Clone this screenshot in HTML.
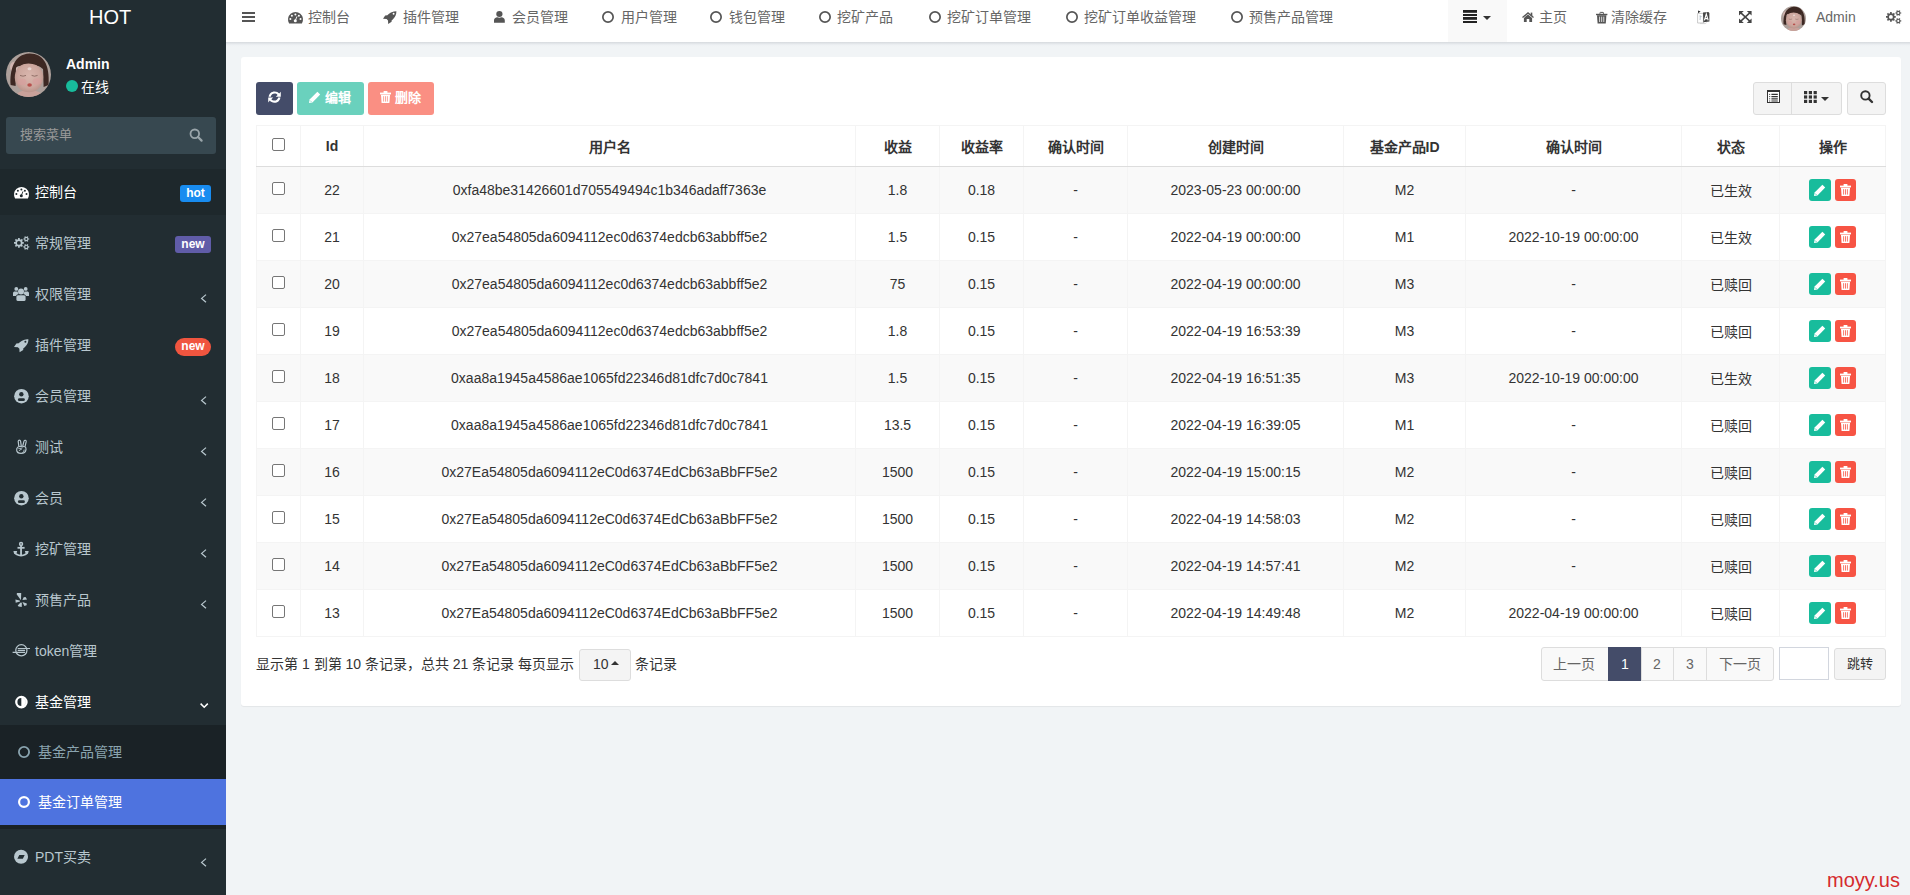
<!DOCTYPE html><html lang="zh-CN"><head><meta charset="utf-8"><style>*{box-sizing:border-box;margin:0;padding:0}
html,body{width:1910px;height:895px;overflow:hidden}
body{background:#f1f4f6;font-family:"Liberation Sans",sans-serif;font-size:14px;color:#333;position:relative}
.abs{position:absolute}
svg{display:block;overflow:visible}
#sb{position:absolute;left:0;top:0;width:226px;height:895px;background:#222d32}
#logo{position:absolute;left:89px;top:3px;font-size:20px;color:#fff;line-height:28px}
.mt{font-size:14px;line-height:18px;white-space:nowrap}
.badge{position:absolute;color:#fff;font-weight:bold;font-size:12px;text-align:center;line-height:17px}
#nav{position:absolute;left:226px;top:0;width:1684px;height:42px;background:#fff}
#navsh{position:absolute;left:226px;top:42px;width:1684px;height:5px;background:linear-gradient(#d6dade,#eef1f4 60%,#f1f4f6)}
.nt{position:absolute;top:8px;font-size:14px;line-height:18px;color:#666;white-space:nowrap}
#panel{position:absolute;left:241px;top:57px;width:1660px;height:649px;background:#fff;border-radius:3px;box-shadow:0 1px 1px rgba(0,0,0,.06)}
table{position:absolute;left:256px;top:125px;border-collapse:collapse;table-layout:fixed;width:1630px}
td,th{border:1px solid #f4f4f4;text-align:center;font-size:14px;color:#333;padding:0;white-space:nowrap}
th{height:41px;font-weight:bold;border-bottom:1px solid #ddd}
td{height:47px}
tr.odd td{background:#f9f9f9}
.cb{display:inline-block;position:relative;top:-3px;width:13px;height:13px;border:1px solid #767676;border-radius:2px;background:#fff;vertical-align:middle}
.op{display:inline-block;position:relative;width:22px;height:22px;border-radius:3px;vertical-align:middle}
</style></head><body>
<div id="sb">
<div id="logo">HOT</div>
<svg class="abs" style="left:6px;top:52px" width="45" height="45" viewBox="0 0 45 45"><defs><clipPath id="avc6"><circle cx="22.5" cy="22.5" r="22.5"/></clipPath><radialGradient id="fg6" cx="50%" cy="45%" r="55%"><stop offset="0" stop-color="#d9b6ad"/><stop offset="0.7" stop-color="#cda79e"/><stop offset="1" stop-color="#bb958c"/></radialGradient></defs><g clip-path="url(#avc6)"><rect width="45" height="45" fill="#ada09b"/><ellipse cx="8" cy="15" rx="4" ry="5" fill="#d2b4b0"/><path d="M4.6 33 C3.6 18 8 2 23.5 1.4 C37 1.2 44 12 42.6 33 L37.6 35 L37 14 L10 14 L9.6 34Z" fill="#3d2823"/><path d="M10 45 C11 40 15 38 23 38.6 C31 38 35 40 37 45Z" fill="#c9a19a"/><ellipse cx="23" cy="25.5" rx="14.2" ry="14.8" fill="url(#fg6)"/><path d="M8.4 17 C9.6 9 15 5.4 23.5 5.2 C31.5 5.4 37.2 9.8 38.2 18 C33 13.6 28 11.6 22.5 11.6 C16.6 11.6 11.8 13.8 8.4 17Z" fill="#3d2823"/><ellipse cx="16" cy="30" rx="4.4" ry="3.2" fill="#d89c9c" opacity="0.55"/><ellipse cx="31" cy="29.5" rx="4.4" ry="3.2" fill="#d89c9c" opacity="0.55"/><path d="M14 23.4 Q17 25 20 23.4 M25.6 23.4 Q28.6 25 31.6 23.4" stroke="#8a6a62" stroke-width="0.9" fill="none"/><ellipse cx="23.6" cy="33" rx="2.3" ry="1.7" fill="#b8504c"/><ellipse cx="23.5" cy="16.8" rx="2" ry="1.5" fill="#eee0dc" opacity="0.8"/></g></svg>
<div class="abs" style="left:66px;top:55px;font-weight:bold;color:#fff;font-size:14px;line-height:18px">Admin</div>
<div class="abs" style="left:66px;top:80px;width:12px;height:12px;border-radius:50%;background:#18bc9c"></div>
<div class="abs" style="left:81px;top:78px;color:#fff;font-size:14px;line-height:18px">在线</div>
<div class="abs" style="left:6px;top:117px;width:210px;height:37px;background:#374850;border-radius:3px"></div>
<div class="abs" style="left:20px;top:126px;color:#999;font-size:13px;line-height:18px">搜索菜单</div>
<svg class="abs" style="left:189px;top:128px" width="14" height="14" viewBox="0 0 14 14"><circle cx="5.8" cy="5.8" r="4.3" fill="none" stroke="#9aa5aa" stroke-width="1.8"/><path d="M9 9l3.6 3.6" stroke="#9aa5aa" stroke-width="2.2" stroke-linecap="round"/></svg>
<div class="abs" style="left:0;top:169px;width:226px;height:46px;background:#1e282c"></div>
<svg preserveAspectRatio="none" class="abs" style="left:13.6px;top:187px" width="15" height="11.5" viewBox="0 0 15 11.5"><path d="M1.1 11.4 A7.5 7.5 0 1 1 13.9 11.4 Z" fill="#fff"/><circle cx="7.4" cy="2.4" r="1" fill="#1e282c"/><circle cx="3.9" cy="3.7" r="1" fill="#1e282c"/><circle cx="10.9" cy="3.7" r="1" fill="#1e282c"/><circle cx="2.4" cy="7.1" r="1" fill="#1e282c"/><circle cx="12.5" cy="7.1" r="1" fill="#1e282c"/><path d="M7.3 8.6 L9 4.4" stroke="#1e282c" stroke-width="0.9"/><circle cx="7.3" cy="8.7" r="1.5" fill="#1e282c"/></svg>
<div class="abs mt" style="left:35px;top:183px;color:#fff;">控制台</div>
<div class="badge" style="left:180px;top:185px;width:31px;height:17px;background:#188cf0;border-radius:3px">hot</div>
<svg preserveAspectRatio="none" class="abs" style="left:13.5px;top:236px" width="15" height="14" viewBox="0 0 15 14"><circle cx="4.9" cy="6.9" r="2.8" fill="none" stroke="#b8c7ce" stroke-width="1.7"/><path d="M7.90 6.90 L9.80 6.90" stroke="#b8c7ce" stroke-width="1.7"/><path d="M7.02 9.02 L8.36 10.36" stroke="#b8c7ce" stroke-width="1.7"/><path d="M4.90 9.90 L4.90 11.80" stroke="#b8c7ce" stroke-width="1.7"/><path d="M2.78 9.02 L1.44 10.36" stroke="#b8c7ce" stroke-width="1.7"/><path d="M1.90 6.90 L0.00 6.90" stroke="#b8c7ce" stroke-width="1.7"/><path d="M2.78 4.78 L1.44 3.44" stroke="#b8c7ce" stroke-width="1.7"/><path d="M4.90 3.90 L4.90 2.00" stroke="#b8c7ce" stroke-width="1.7"/><path d="M7.02 4.78 L8.36 3.44" stroke="#b8c7ce" stroke-width="1.7"/><circle cx="12.3" cy="3.0" r="1.65" fill="none" stroke="#b8c7ce" stroke-width="1.2"/><path d="M14.20 3.00 L15.25 3.00" stroke="#b8c7ce" stroke-width="1.2"/><path d="M13.25 4.65 L13.78 5.55" stroke="#b8c7ce" stroke-width="1.2"/><path d="M11.35 4.65 L10.83 5.55" stroke="#b8c7ce" stroke-width="1.2"/><path d="M10.40 3.00 L9.35 3.00" stroke="#b8c7ce" stroke-width="1.2"/><path d="M11.35 1.35 L10.82 0.45" stroke="#b8c7ce" stroke-width="1.2"/><path d="M13.25 1.35 L13.78 0.45" stroke="#b8c7ce" stroke-width="1.2"/><circle cx="12.3" cy="10.9" r="1.65" fill="none" stroke="#b8c7ce" stroke-width="1.2"/><path d="M14.20 10.90 L15.25 10.90" stroke="#b8c7ce" stroke-width="1.2"/><path d="M13.25 12.55 L13.78 13.45" stroke="#b8c7ce" stroke-width="1.2"/><path d="M11.35 12.55 L10.83 13.45" stroke="#b8c7ce" stroke-width="1.2"/><path d="M10.40 10.90 L9.35 10.90" stroke="#b8c7ce" stroke-width="1.2"/><path d="M11.35 9.25 L10.82 8.35" stroke="#b8c7ce" stroke-width="1.2"/><path d="M13.25 9.25 L13.78 8.35" stroke="#b8c7ce" stroke-width="1.2"/></svg>
<div class="abs mt" style="left:35px;top:234px;color:#b8c7ce;">常规管理</div>
<div class="badge" style="left:175px;top:236px;width:36px;height:17px;background:#605ca8;border-radius:3px">new</div>
<svg preserveAspectRatio="none" class="abs" style="left:13px;top:287px" width="16" height="14" viewBox="0 0 16 14"><circle cx="8" cy="4.4" r="3" fill="#b8c7ce"/><circle cx="3.3" cy="1.9" r="1.9" fill="#b8c7ce"/><circle cx="12.7" cy="1.9" r="1.9" fill="#b8c7ce"/><rect x="3.4" y="8.2" width="9.2" height="5.8" rx="1.6" fill="#b8c7ce"/><path d="M0 9 L0 6.2 C0 5 0.8 4.4 1.8 4.4 L4.6 4.4 C4.8 5.6 5.2 6.2 5.8 7 C4.4 7.4 3.4 8 3 9Z" fill="#b8c7ce"/><path d="M16 9 L16 6.2 C16 5 15.2 4.4 14.2 4.4 L11.4 4.4 C11.2 5.6 10.8 6.2 10.2 7 C11.6 7.4 12.6 8 13 9Z" fill="#b8c7ce"/></svg>
<div class="abs mt" style="left:35px;top:285px;color:#b8c7ce;">权限管理</div>
<svg class="abs" style="left:201px;top:294px" width="7" height="9" viewBox="0 0 7 9"><path d="M5 0.6 L0.6 4.4 L5 8.2" fill="none" stroke="#b8c7ce" stroke-width="1.25"/></svg>
<svg preserveAspectRatio="none" class="abs" style="left:14px;top:338.8px" width="14.5" height="13.2" viewBox="0 0 13.5 13"><path d="M13.4 0.2 C13.4 1.6 13.2 3.2 12.6 4.4 C11.6 6.4 10.2 8 8.6 9.4 L8.6 10.8 L5.2 13 L5 9.6 L3.6 8.1 L0 7.8 L2.2 4.4 L4.4 4.2 C5.8 2.8 7 2 8.6 1.2 C10.2 0.4 11.8 0.2 13.4 0.2Z" fill="#b8c7ce"/><circle cx="10.6" cy="2.7" r="0.95" fill="#222d32"/></svg>
<div class="abs mt" style="left:35px;top:336px;color:#b8c7ce;">插件管理</div>
<div class="badge" style="left:175px;top:338px;width:36px;height:18px;background:#f0553f;border-radius:9px">new</div>
<svg preserveAspectRatio="none" class="abs" style="left:13.6px;top:389px" width="15" height="14" viewBox="0 0 15 14"><ellipse cx="7.45" cy="7.2" rx="7.3" ry="7.2" fill="#b8c7ce"/><circle cx="7.35" cy="5.25" r="2.2" fill="#222d32"/><rect x="3.9" y="9.2" width="7" height="2.9" rx="1.45" fill="#222d32"/></svg>
<div class="abs mt" style="left:35px;top:387px;color:#b8c7ce;">会员管理</div>
<svg class="abs" style="left:201px;top:396px" width="7" height="9" viewBox="0 0 7 9"><path d="M5 0.6 L0.6 4.4 L5 8.2" fill="none" stroke="#b8c7ce" stroke-width="1.25"/></svg>
<svg preserveAspectRatio="none" class="abs" style="left:15.6px;top:440px" width="11" height="14" viewBox="0 0 11 14"><path d="M2.8 6.4 L2.2 1.3 Q2.3 0.2 3.4 0.2 Q4.4 0.2 4.6 1.3 L5.3 6.2" fill="none" stroke="#b8c7ce" stroke-width="1.2"/><path d="M6.7 6.2 L8 1.1 Q8.4 0.1 9.4 0.3 Q10.4 0.7 10.2 1.7 L9 6.6" fill="none" stroke="#b8c7ce" stroke-width="1.2"/><path d="M1.6 7.4 Q0.5 8.4 0.7 10.4 Q1.1 13.4 5 13.4 Q9.4 13.4 10 9.6 Q10.2 7.4 9 6.8 Q7.8 6.2 6.2 6.9 Q4.6 6.2 3.2 6.5 Q2.2 6.8 1.6 7.4 Z" fill="none" stroke="#b8c7ce" stroke-width="1.2"/><path d="M2.4 8.6 Q4 7.8 5.6 8.8 M2.8 10.8 L6.2 8.6 M6.4 12.6 Q8.2 11.8 8.2 9.6" fill="none" stroke="#b8c7ce" stroke-width="0.9"/></svg>
<div class="abs mt" style="left:35px;top:438px;color:#b8c7ce;">测试</div>
<svg class="abs" style="left:201px;top:447px" width="7" height="9" viewBox="0 0 7 9"><path d="M5 0.6 L0.6 4.4 L5 8.2" fill="none" stroke="#b8c7ce" stroke-width="1.25"/></svg>
<svg preserveAspectRatio="none" class="abs" style="left:13.6px;top:491px" width="15" height="14" viewBox="0 0 15 14"><ellipse cx="7.45" cy="7.2" rx="7.3" ry="7.2" fill="#b8c7ce"/><circle cx="7.35" cy="5.25" r="2.2" fill="#222d32"/><rect x="3.9" y="9.2" width="7" height="2.9" rx="1.45" fill="#222d32"/></svg>
<div class="abs mt" style="left:35px;top:489px;color:#b8c7ce;">会员</div>
<svg class="abs" style="left:201px;top:498px" width="7" height="9" viewBox="0 0 7 9"><path d="M5 0.6 L0.6 4.4 L5 8.2" fill="none" stroke="#b8c7ce" stroke-width="1.25"/></svg>
<svg preserveAspectRatio="none" class="abs" style="left:13px;top:542px" width="16" height="14" viewBox="0 0 16 14"><circle cx="8.06" cy="1.9" r="1.45" fill="none" stroke="#b8c7ce" stroke-width="1.5"/><rect x="4.5" y="4.9" width="7.1" height="1.8" fill="#b8c7ce"/><rect x="7.15" y="3.2" width="1.8" height="10" fill="#b8c7ce"/><path d="M1.6 10.2 Q3 13.4 8.05 13.6 Q13.1 13.4 14.5 10.2" fill="none" stroke="#b8c7ce" stroke-width="1.7"/><path d="M0.4 9 H4.2 L3.6 11 L1.2 12Z M15.7 9 H11.9 L12.5 11 L14.9 12Z" fill="#b8c7ce"/></svg>
<div class="abs mt" style="left:35px;top:540px;color:#b8c7ce;">挖矿管理</div>
<svg class="abs" style="left:201px;top:549px" width="7" height="9" viewBox="0 0 7 9"><path d="M5 0.6 L0.6 4.4 L5 8.2" fill="none" stroke="#b8c7ce" stroke-width="1.25"/></svg>
<svg preserveAspectRatio="none" class="abs" style="left:14.8px;top:593px" width="12.5" height="14" viewBox="0 0 12.5 14"><path d="M1.6 1.2 L2 0 L6.2 0 L6 7.3Z" fill="#b8c7ce"/><path d="M7.4 7 L8.7 4.2 L10.5 3.9 L12.1 6.4Z" fill="#b8c7ce"/><path d="M0.4 6.4 L0.7 9.7 L5.1 8.4 L4.7 7.5Z" fill="#b8c7ce"/><path d="M2.7 12.4 L5.6 9.5 L6.9 9.7 L6.7 14 L3.6 13.5Z" fill="#b8c7ce"/><path d="M7.4 9.1 L11.8 10.4 L11.6 12.2 L9.4 13.1Z" fill="#b8c7ce"/></svg>
<div class="abs mt" style="left:35px;top:591px;color:#b8c7ce;">预售产品</div>
<svg class="abs" style="left:201px;top:600px" width="7" height="9" viewBox="0 0 7 9"><path d="M5 0.6 L0.6 4.4 L5 8.2" fill="none" stroke="#b8c7ce" stroke-width="1.25"/></svg>
<svg preserveAspectRatio="none" class="abs" style="left:12.7px;top:644px" width="16.5" height="13" viewBox="0 0 16.5 13"><circle cx="8.36" cy="6.3" r="5.6" fill="none" stroke="#b8c7ce" stroke-width="1.25"/><path d="M4.7 4.5 H17 M4.7 6.4 H12.05 M-0.4 8.4 H12.05" stroke="#b8c7ce" stroke-width="1.1"/></svg>
<div class="abs mt" style="left:35px;top:642px;color:#b8c7ce;">token管理</div>
<svg preserveAspectRatio="none" class="abs" style="left:14.8px;top:695.8px" width="13" height="12.5" viewBox="0 0 13 12.5"><circle cx="6.4" cy="6.1" r="5.15" fill="none" stroke="#fff" stroke-width="2.3"/><path d="M6.3 1.5 A4.6 4.6 0 0 1 6.3 10.7Z" fill="#fff"/></svg>
<div class="abs mt" style="left:35px;top:693px;color:#fff;">基金管理</div>
<svg class="abs" style="left:200.3px;top:703.4px" width="8.4" height="5" viewBox="0 0 8.4 5"><path d="M0.6 0.6 L4.2 4.2 L7.8 0.6" fill="none" stroke="#fff" stroke-width="1.5"/></svg>
<div class="abs" style="left:0;top:725px;width:226px;height:104px;background:#1a2226"></div>
<svg class="abs" style="left:18px;top:746px" width="12" height="12" viewBox="0 0 12 12"><circle cx="6" cy="6" r="5.10" fill="none" stroke="#8aa4af" stroke-width="1.8"/></svg>
<div class="abs mt" style="left:38px;top:743px;color:#8aa4af">基金产品管理</div>
<div class="abs" style="left:0;top:779px;width:226px;height:46px;background:#4e73df"></div>
<svg class="abs" style="left:18px;top:796px" width="12" height="12" viewBox="0 0 12 12"><circle cx="6" cy="6" r="4.90" fill="none" stroke="#fff" stroke-width="2.2"/></svg>
<div class="abs mt" style="left:38px;top:793px;color:#fff">基金订单管理</div>
<svg class="abs" style="left:14px;top:850px" width="14" height="14" viewBox="0 0 14 14"><circle cx="7.05" cy="6.8" r="7" fill="#b8c7ce"/><path d="M3.4 8.8 L5.3 5.1 L10.7 5.1 L8.8 8.8Z" fill="#222d32"/></svg>
<div class="abs mt" style="left:35px;top:848px;color:#b8c7ce">PDT买卖</div>
<svg class="abs" style="left:201px;top:857.5px" width="7" height="9" viewBox="0 0 7 9"><path d="M5 0.6 L0.6 4.4 L5 8.2" fill="none" stroke="#b8c7ce" stroke-width="1.25"/></svg>
</div>
<div id="nav"></div><div id="navsh"></div>
<svg class="abs" style="left:242px;top:12px" width="13" height="10" viewBox="0 0 13 10"><rect x="0" y="0" width="13" height="2" fill="#555"/><rect x="0" y="4" width="13" height="2" fill="#555"/><rect x="0" y="8" width="13" height="2" fill="#555"/></svg>
<svg class="abs" style="left:288px;top:11.8px" width="15" height="11.5" viewBox="0 0 15 11.5"><path d="M1.1 11.4 A7.5 7.5 0 1 1 13.9 11.4 Z" fill="#555"/><circle cx="7.4" cy="2.4" r="1" fill="#fff"/><circle cx="3.9" cy="3.7" r="1" fill="#fff"/><circle cx="10.9" cy="3.7" r="1" fill="#fff"/><circle cx="2.4" cy="7.1" r="1" fill="#fff"/><circle cx="12.5" cy="7.1" r="1" fill="#fff"/><path d="M7.3 8.6 L9 4.4" stroke="#fff" stroke-width="0.9"/><circle cx="7.3" cy="8.7" r="1.5" fill="#fff"/></svg>
<div class="nt" style="left:308px">控制台</div>
<svg class="abs" style="left:383.3px;top:10.8px" width="13.5" height="13" viewBox="0 0 13.5 13"><path d="M13.4 0.2 C13.4 1.6 13.2 3.2 12.6 4.4 C11.6 6.4 10.2 8 8.6 9.4 L8.6 10.8 L5.2 13 L5 9.6 L3.6 8.1 L0 7.8 L2.2 4.4 L4.4 4.2 C5.8 2.8 7 2 8.6 1.2 C10.2 0.4 11.8 0.2 13.4 0.2Z" fill="#555"/><circle cx="10.6" cy="2.7" r="0.95" fill="#fff"/></svg>
<div class="nt" style="left:403px">插件管理</div>
<svg preserveAspectRatio="none" class="abs" style="left:493.6px;top:10.8px" width="10.8" height="11.8" viewBox="0 0 11 13"><circle cx="5.5" cy="3.3" r="3.2" fill="#555"/><path d="M0 13 L0 10.4 C0 8.2 1.6 7 3.4 6.9 C4.6 7.6 6.4 7.6 7.6 6.9 C9.4 7 11 8.2 11 10.4 L11 13Z" fill="#555"/></svg>
<div class="nt" style="left:512px">会员管理</div>
<svg class="abs" style="left:602px;top:11px" width="12" height="12" viewBox="0 0 12 12"><circle cx="6" cy="6" r="5.15" fill="none" stroke="#555" stroke-width="1.7"/></svg>
<div class="nt" style="left:621px">用户管理</div>
<svg class="abs" style="left:710px;top:11px" width="12" height="12" viewBox="0 0 12 12"><circle cx="6" cy="6" r="5.15" fill="none" stroke="#555" stroke-width="1.7"/></svg>
<div class="nt" style="left:729px">钱包管理</div>
<svg class="abs" style="left:819px;top:11px" width="12" height="12" viewBox="0 0 12 12"><circle cx="6" cy="6" r="5.15" fill="none" stroke="#555" stroke-width="1.7"/></svg>
<div class="nt" style="left:837px">挖矿产品</div>
<svg class="abs" style="left:929px;top:11px" width="12" height="12" viewBox="0 0 12 12"><circle cx="6" cy="6" r="5.15" fill="none" stroke="#555" stroke-width="1.7"/></svg>
<div class="nt" style="left:947px">挖矿订单管理</div>
<svg class="abs" style="left:1066px;top:11px" width="12" height="12" viewBox="0 0 12 12"><circle cx="6" cy="6" r="5.15" fill="none" stroke="#555" stroke-width="1.7"/></svg>
<div class="nt" style="left:1084px">挖矿订单收益管理</div>
<svg class="abs" style="left:1231px;top:11px" width="12" height="12" viewBox="0 0 12 12"><circle cx="6" cy="6" r="5.15" fill="none" stroke="#555" stroke-width="1.7"/></svg>
<div class="nt" style="left:1249px">预售产品管理</div>
<div class="abs" style="left:1448px;top:0;width:59px;height:42px;background:#f9f9f9"></div>
<svg class="abs" style="left:1463px;top:10px" width="14" height="13" viewBox="0 0 14 13"><rect x="0" y="0" width="14" height="2.8" fill="#222"/><rect x="0" y="4" width="14" height="2" fill="#222"/><rect x="0" y="7" width="14" height="2.8" fill="#222"/><rect x="0" y="11" width="14" height="2" fill="#222"/></svg>
<svg class="abs" style="left:1483px;top:16px" width="8" height="4" viewBox="0 0 8 4"><path d="M0 0 H8 L4 4Z" fill="#333"/></svg>
<svg class="abs" style="left:1522px;top:12px" width="12" height="10" viewBox="0 0 12 10"><path d="M0.5 5.6 L6 0.9 L11.5 5.6" fill="none" stroke="#555" stroke-width="1.3"/><rect x="8.7" y="0.6" width="1.6" height="3.4" fill="#555"/><path d="M1.9 5.9 L6 2.5 L10.1 5.9 V10 H7.3 V7 H4.7 V10 H1.9Z" fill="#555"/></svg>
<div class="nt" style="left:1539px">主页</div>
<svg class="abs" style="left:1596.4px;top:11.5px" width="11.4" height="11.4" viewBox="0 0 11.4 11.4"><path d="M3.9 1.8 V0.9 Q3.9 0.4 4.4 0.4 H7 Q7.5 0.4 7.5 0.9 V1.8" fill="none" stroke="#555" stroke-width="1"/><rect x="0" y="1.8" width="11.4" height="1.4" fill="#555"/><path d="M1 3.2 H10.4 L9.8 11.4 H1.6Z" fill="#555"/><path d="M3.6 4.6 V10 M5.7 4.6 V10 M7.8 4.6 V10" stroke="#fff" stroke-width="0.8"/></svg>
<div class="nt" style="left:1611px">清除缓存</div>
<svg class="abs" style="left:1697px;top:10px" width="13" height="14" viewBox="0 0 13 14"><path d="M0.6 3.4 H6.4 V13 H0.6Z" fill="#fff" stroke="#bbb" stroke-width="0.8"/><path d="M1 0.4 L3.6 1.6 L1 3.2Z" fill="#333"/><path d="M6 2.6 L11.4 2 L12.4 3 L12.4 11.4 L6.4 12.2Z" fill="#444"/><path d="M7.4 10.4 L9.3 4 L11.2 10.4 M8 8.6 H10.6" stroke="#fff" stroke-width="1.1" fill="none"/><path d="M2.4 6 Q3.6 5.6 4.6 6.6 M3.4 6 L3 10" stroke="#9ab" stroke-width="0.7" fill="none"/><path d="M3 13.6 H8.4 L9.6 12.6" stroke="#ccc" stroke-width="0.8" fill="none"/></svg>
<svg class="abs" style="left:1739px;top:11px" width="12.6" height="12" viewBox="0 0 12.6 12"><path d="M1.6 1.6 L11 10.4 M11 1.6 L1.6 10.4" stroke="#444" stroke-width="1.5"/><path d="M0 0 H4.8 L0 4.6Z M12.6 0 H7.8 L12.6 4.6Z M0 12 H4.8 L0 7.4Z M12.6 12 H7.8 L12.6 7.4Z" fill="#444"/></svg>
<svg class="abs" style="left:1781px;top:6px" width="25" height="25" viewBox="0 0 45 45"><defs><clipPath id="avc1781"><circle cx="22.5" cy="22.5" r="22.5"/></clipPath><radialGradient id="fg1781" cx="50%" cy="45%" r="55%"><stop offset="0" stop-color="#d9b6ad"/><stop offset="0.7" stop-color="#cda79e"/><stop offset="1" stop-color="#bb958c"/></radialGradient></defs><g clip-path="url(#avc1781)"><rect width="45" height="45" fill="#ada09b"/><ellipse cx="8" cy="15" rx="4" ry="5" fill="#d2b4b0"/><path d="M4.6 33 C3.6 18 8 2 23.5 1.4 C37 1.2 44 12 42.6 33 L37.6 35 L37 14 L10 14 L9.6 34Z" fill="#3d2823"/><path d="M10 45 C11 40 15 38 23 38.6 C31 38 35 40 37 45Z" fill="#c9a19a"/><ellipse cx="23" cy="25.5" rx="14.2" ry="14.8" fill="url(#fg1781)"/><path d="M8.4 17 C9.6 9 15 5.4 23.5 5.2 C31.5 5.4 37.2 9.8 38.2 18 C33 13.6 28 11.6 22.5 11.6 C16.6 11.6 11.8 13.8 8.4 17Z" fill="#3d2823"/><ellipse cx="16" cy="30" rx="4.4" ry="3.2" fill="#d89c9c" opacity="0.55"/><ellipse cx="31" cy="29.5" rx="4.4" ry="3.2" fill="#d89c9c" opacity="0.55"/><path d="M14 23.4 Q17 25 20 23.4 M25.6 23.4 Q28.6 25 31.6 23.4" stroke="#8a6a62" stroke-width="0.9" fill="none"/><ellipse cx="23.6" cy="33" rx="2.3" ry="1.7" fill="#b8504c"/><ellipse cx="23.5" cy="16.8" rx="2" ry="1.5" fill="#eee0dc" opacity="0.8"/></g></svg>
<div class="nt" style="left:1816px">Admin</div>
<svg class="abs" style="left:1886px;top:10px" width="15" height="14" viewBox="0 0 15 14"><circle cx="4.9" cy="6.9" r="2.8" fill="none" stroke="#555" stroke-width="1.7"/><path d="M7.90 6.90 L9.80 6.90" stroke="#555" stroke-width="1.7"/><path d="M7.02 9.02 L8.36 10.36" stroke="#555" stroke-width="1.7"/><path d="M4.90 9.90 L4.90 11.80" stroke="#555" stroke-width="1.7"/><path d="M2.78 9.02 L1.44 10.36" stroke="#555" stroke-width="1.7"/><path d="M1.90 6.90 L0.00 6.90" stroke="#555" stroke-width="1.7"/><path d="M2.78 4.78 L1.44 3.44" stroke="#555" stroke-width="1.7"/><path d="M4.90 3.90 L4.90 2.00" stroke="#555" stroke-width="1.7"/><path d="M7.02 4.78 L8.36 3.44" stroke="#555" stroke-width="1.7"/><circle cx="12.3" cy="3.0" r="1.65" fill="none" stroke="#555" stroke-width="1.2"/><path d="M14.20 3.00 L15.25 3.00" stroke="#555" stroke-width="1.2"/><path d="M13.25 4.65 L13.78 5.55" stroke="#555" stroke-width="1.2"/><path d="M11.35 4.65 L10.83 5.55" stroke="#555" stroke-width="1.2"/><path d="M10.40 3.00 L9.35 3.00" stroke="#555" stroke-width="1.2"/><path d="M11.35 1.35 L10.82 0.45" stroke="#555" stroke-width="1.2"/><path d="M13.25 1.35 L13.78 0.45" stroke="#555" stroke-width="1.2"/><circle cx="12.3" cy="10.9" r="1.65" fill="none" stroke="#555" stroke-width="1.2"/><path d="M14.20 10.90 L15.25 10.90" stroke="#555" stroke-width="1.2"/><path d="M13.25 12.55 L13.78 13.45" stroke="#555" stroke-width="1.2"/><path d="M11.35 12.55 L10.83 13.45" stroke="#555" stroke-width="1.2"/><path d="M10.40 10.90 L9.35 10.90" stroke="#555" stroke-width="1.2"/><path d="M11.35 9.25 L10.82 8.35" stroke="#555" stroke-width="1.2"/><path d="M13.25 9.25 L13.78 8.35" stroke="#555" stroke-width="1.2"/></svg>
<div id="panel"></div>
<div class="abs" style="left:256px;top:82px;width:37px;height:33px;background:#444c69;border-radius:3px"></div>
<svg class="abs" style="left:268px;top:91px" width="13" height="12.2" viewBox="0 0 13 12.2"><path d="M0.6 5.8 C1 2.6 3.4 0.4 6.6 0.4 C8.6 0.4 10.2 1.2 11.2 2.6 L12.8 0.8 V5.8 H7.8 L9.6 4 C8.9 3 7.8 2.6 6.6 2.6 C4.8 2.6 3.2 3.8 2.8 5.8 Z M12.4 6.4 C12 9.6 9.6 11.8 6.4 11.8 C4.4 11.8 2.8 11 1.8 9.6 L0.2 11.4 V6.4 H5.2 L3.4 8.2 C4.1 9.2 5.2 9.6 6.4 9.6 C8.2 9.6 9.8 8.4 10.2 6.4 Z" fill="#fff"/></svg>
<div class="abs" style="left:297px;top:82px;width:67px;height:33px;background:#6ad1bd;border-radius:3px"></div>
<svg class="abs" style="left:309px;top:91px" width="12" height="12" viewBox="0 0 12 12"><path d="M0 12 L0.6 8.6 L8.4 0.8 L11.2 3.6 L3.4 11.4Z" fill="#fff"/><path d="M1.2 9.6 L2.4 10.8" stroke="#6ad1bd" stroke-width="0.8"/></svg>
<div class="abs" style="left:325px;top:89px;font-size:13px;line-height:18px;color:#fff;font-weight:bold">编辑</div>
<div class="abs" style="left:368px;top:82px;width:66px;height:33px;background:#fa8f83;border-radius:3px"></div>
<svg class="abs" style="left:380px;top:91px" width="11" height="12" viewBox="0 0 11 12"><rect x="0" y="1.6" width="11" height="1.8" fill="#fff"/><rect x="3.6" y="0" width="3.8" height="2" fill="#fff"/><path d="M1 3.8 H10 L9.4 12 H1.6Z" fill="#fff"/><path d="M3.6 5.2 V10.6 M5.5 5.2 V10.6 M7.4 5.2 V10.6" stroke="#fa8f83" stroke-width="0.8"/></svg>
<div class="abs" style="left:395px;top:89px;font-size:13px;line-height:18px;color:#fff;font-weight:bold">删除</div>
<div class="abs" style="left:1753px;top:82px;width:89px;height:33px;background:#f4f4f4;border:1px solid #ddd;border-radius:3px"></div>
<div class="abs" style="left:1791px;top:82px;width:1px;height:33px;background:#ddd"></div>
<svg class="abs" style="left:1767px;top:90px" width="13" height="13" viewBox="0 0 13 13"><rect x="0.5" y="0.5" width="12" height="12" fill="#fff" stroke="#333" stroke-width="1"/><rect x="0" y="0" width="13" height="2" fill="#333"/><path d="M2.2 4.4 h1 M2.2 6.6 h1 M2.2 8.8 h1 M2.2 11 h1" stroke="#333" stroke-width="1"/><path d="M4.4 4.4 H10.8 M4.4 6.6 H10.8 M4.4 8.8 H10.8 M4.4 11 H10.8" stroke="#333" stroke-width="1.2"/></svg>
<svg class="abs" style="left:1804px;top:91px" width="13" height="12" viewBox="0 0 13 12"><rect x="0" y="0" width="3.2" height="3.2" fill="#333"/><rect x="0" y="4.4" width="3.2" height="3.2" fill="#333"/><rect x="0" y="8.8" width="3.2" height="3.2" fill="#333"/><rect x="4.8" y="0" width="3.2" height="3.2" fill="#333"/><rect x="4.8" y="4.4" width="3.2" height="3.2" fill="#333"/><rect x="4.8" y="8.8" width="3.2" height="3.2" fill="#333"/><rect x="9.6" y="0" width="3.2" height="3.2" fill="#333"/><rect x="9.6" y="4.4" width="3.2" height="3.2" fill="#333"/><rect x="9.6" y="8.8" width="3.2" height="3.2" fill="#333"/></svg>
<svg class="abs" style="left:1821px;top:97px" width="8" height="4" viewBox="0 0 8 4"><path d="M0 0 H8 L4 4Z" fill="#333"/></svg>
<div class="abs" style="left:1847px;top:82px;width:39px;height:33px;background:#f4f4f4;border:1px solid #ddd;border-radius:3px"></div>
<svg class="abs" style="left:1860px;top:90px" width="13" height="13" viewBox="0 0 13 13"><circle cx="5.4" cy="5.4" r="4.2" fill="none" stroke="#333" stroke-width="1.9"/><path d="M8.6 8.6 L12 12" stroke="#333" stroke-width="2.4" stroke-linecap="round"/></svg>
<table><colgroup><col style="width:44px"><col style="width:63px"><col style="width:492px"><col style="width:84px"><col style="width:84px"><col style="width:104px"><col style="width:216px"><col style="width:122px"><col style="width:216px"><col style="width:98px"><col style="width:106px"></colgroup><tr><th><span class="cb"></span></th><th>Id</th><th>用户名</th><th>收益</th><th>收益率</th><th>确认时间</th><th>创建时间</th><th>基金产品ID</th><th>确认时间</th><th>状态</th><th>操作</th></tr><tr class="odd"><td><span class="cb"></span></td><td>22</td><td>0xfa48be31426601d705549494c1b346adaff7363e</td><td>1.8</td><td>0.18</td><td>-</td><td>2023-05-23 00:00:00</td><td>M2</td><td>-</td><td>已生效</td><td><span class="op" style="background:#18bc9c;margin-right:4px"><svg width="12" height="12" viewBox="0 0 12 12" style="position:absolute;left:5px;top:5px"><path d="M0 12 L0.6 8.6 L8.4 0.8 L11.2 3.6 L3.4 11.4Z" fill="#fff"/><path d="M1.2 9.6 L2.4 10.8" stroke="#18bc9c" stroke-width="0.8"/></svg></span><span class="op" style="background:#f75444;width:21px"><svg width="11" height="12" viewBox="0 0 11 12" style="position:absolute;left:5px;top:5px"><rect x="0" y="1.6" width="11" height="1.8" fill="#fff"/><rect x="3.6" y="0" width="3.8" height="2" fill="#fff"/><path d="M1 3.8 H10 L9.4 12 H1.6Z" fill="#fff"/><path d="M3.6 5.2 V10.6 M5.5 5.2 V10.6 M7.4 5.2 V10.6" stroke="#f75444" stroke-width="0.8"/></svg></span></td></tr><tr><td><span class="cb"></span></td><td>21</td><td>0x27ea54805da6094112ec0d6374edcb63abbff5e2</td><td>1.5</td><td>0.15</td><td>-</td><td>2022-04-19 00:00:00</td><td>M1</td><td>2022-10-19 00:00:00</td><td>已生效</td><td><span class="op" style="background:#18bc9c;margin-right:4px"><svg width="12" height="12" viewBox="0 0 12 12" style="position:absolute;left:5px;top:5px"><path d="M0 12 L0.6 8.6 L8.4 0.8 L11.2 3.6 L3.4 11.4Z" fill="#fff"/><path d="M1.2 9.6 L2.4 10.8" stroke="#18bc9c" stroke-width="0.8"/></svg></span><span class="op" style="background:#f75444;width:21px"><svg width="11" height="12" viewBox="0 0 11 12" style="position:absolute;left:5px;top:5px"><rect x="0" y="1.6" width="11" height="1.8" fill="#fff"/><rect x="3.6" y="0" width="3.8" height="2" fill="#fff"/><path d="M1 3.8 H10 L9.4 12 H1.6Z" fill="#fff"/><path d="M3.6 5.2 V10.6 M5.5 5.2 V10.6 M7.4 5.2 V10.6" stroke="#f75444" stroke-width="0.8"/></svg></span></td></tr><tr class="odd"><td><span class="cb"></span></td><td>20</td><td>0x27ea54805da6094112ec0d6374edcb63abbff5e2</td><td>75</td><td>0.15</td><td>-</td><td>2022-04-19 00:00:00</td><td>M3</td><td>-</td><td>已赎回</td><td><span class="op" style="background:#18bc9c;margin-right:4px"><svg width="12" height="12" viewBox="0 0 12 12" style="position:absolute;left:5px;top:5px"><path d="M0 12 L0.6 8.6 L8.4 0.8 L11.2 3.6 L3.4 11.4Z" fill="#fff"/><path d="M1.2 9.6 L2.4 10.8" stroke="#18bc9c" stroke-width="0.8"/></svg></span><span class="op" style="background:#f75444;width:21px"><svg width="11" height="12" viewBox="0 0 11 12" style="position:absolute;left:5px;top:5px"><rect x="0" y="1.6" width="11" height="1.8" fill="#fff"/><rect x="3.6" y="0" width="3.8" height="2" fill="#fff"/><path d="M1 3.8 H10 L9.4 12 H1.6Z" fill="#fff"/><path d="M3.6 5.2 V10.6 M5.5 5.2 V10.6 M7.4 5.2 V10.6" stroke="#f75444" stroke-width="0.8"/></svg></span></td></tr><tr><td><span class="cb"></span></td><td>19</td><td>0x27ea54805da6094112ec0d6374edcb63abbff5e2</td><td>1.8</td><td>0.15</td><td>-</td><td>2022-04-19 16:53:39</td><td>M3</td><td>-</td><td>已赎回</td><td><span class="op" style="background:#18bc9c;margin-right:4px"><svg width="12" height="12" viewBox="0 0 12 12" style="position:absolute;left:5px;top:5px"><path d="M0 12 L0.6 8.6 L8.4 0.8 L11.2 3.6 L3.4 11.4Z" fill="#fff"/><path d="M1.2 9.6 L2.4 10.8" stroke="#18bc9c" stroke-width="0.8"/></svg></span><span class="op" style="background:#f75444;width:21px"><svg width="11" height="12" viewBox="0 0 11 12" style="position:absolute;left:5px;top:5px"><rect x="0" y="1.6" width="11" height="1.8" fill="#fff"/><rect x="3.6" y="0" width="3.8" height="2" fill="#fff"/><path d="M1 3.8 H10 L9.4 12 H1.6Z" fill="#fff"/><path d="M3.6 5.2 V10.6 M5.5 5.2 V10.6 M7.4 5.2 V10.6" stroke="#f75444" stroke-width="0.8"/></svg></span></td></tr><tr class="odd"><td><span class="cb"></span></td><td>18</td><td>0xaa8a1945a4586ae1065fd22346d81dfc7d0c7841</td><td>1.5</td><td>0.15</td><td>-</td><td>2022-04-19 16:51:35</td><td>M3</td><td>2022-10-19 00:00:00</td><td>已生效</td><td><span class="op" style="background:#18bc9c;margin-right:4px"><svg width="12" height="12" viewBox="0 0 12 12" style="position:absolute;left:5px;top:5px"><path d="M0 12 L0.6 8.6 L8.4 0.8 L11.2 3.6 L3.4 11.4Z" fill="#fff"/><path d="M1.2 9.6 L2.4 10.8" stroke="#18bc9c" stroke-width="0.8"/></svg></span><span class="op" style="background:#f75444;width:21px"><svg width="11" height="12" viewBox="0 0 11 12" style="position:absolute;left:5px;top:5px"><rect x="0" y="1.6" width="11" height="1.8" fill="#fff"/><rect x="3.6" y="0" width="3.8" height="2" fill="#fff"/><path d="M1 3.8 H10 L9.4 12 H1.6Z" fill="#fff"/><path d="M3.6 5.2 V10.6 M5.5 5.2 V10.6 M7.4 5.2 V10.6" stroke="#f75444" stroke-width="0.8"/></svg></span></td></tr><tr><td><span class="cb"></span></td><td>17</td><td>0xaa8a1945a4586ae1065fd22346d81dfc7d0c7841</td><td>13.5</td><td>0.15</td><td>-</td><td>2022-04-19 16:39:05</td><td>M1</td><td>-</td><td>已赎回</td><td><span class="op" style="background:#18bc9c;margin-right:4px"><svg width="12" height="12" viewBox="0 0 12 12" style="position:absolute;left:5px;top:5px"><path d="M0 12 L0.6 8.6 L8.4 0.8 L11.2 3.6 L3.4 11.4Z" fill="#fff"/><path d="M1.2 9.6 L2.4 10.8" stroke="#18bc9c" stroke-width="0.8"/></svg></span><span class="op" style="background:#f75444;width:21px"><svg width="11" height="12" viewBox="0 0 11 12" style="position:absolute;left:5px;top:5px"><rect x="0" y="1.6" width="11" height="1.8" fill="#fff"/><rect x="3.6" y="0" width="3.8" height="2" fill="#fff"/><path d="M1 3.8 H10 L9.4 12 H1.6Z" fill="#fff"/><path d="M3.6 5.2 V10.6 M5.5 5.2 V10.6 M7.4 5.2 V10.6" stroke="#f75444" stroke-width="0.8"/></svg></span></td></tr><tr class="odd"><td><span class="cb"></span></td><td>16</td><td>0x27Ea54805da6094112eC0d6374EdCb63aBbFF5e2</td><td>1500</td><td>0.15</td><td>-</td><td>2022-04-19 15:00:15</td><td>M2</td><td>-</td><td>已赎回</td><td><span class="op" style="background:#18bc9c;margin-right:4px"><svg width="12" height="12" viewBox="0 0 12 12" style="position:absolute;left:5px;top:5px"><path d="M0 12 L0.6 8.6 L8.4 0.8 L11.2 3.6 L3.4 11.4Z" fill="#fff"/><path d="M1.2 9.6 L2.4 10.8" stroke="#18bc9c" stroke-width="0.8"/></svg></span><span class="op" style="background:#f75444;width:21px"><svg width="11" height="12" viewBox="0 0 11 12" style="position:absolute;left:5px;top:5px"><rect x="0" y="1.6" width="11" height="1.8" fill="#fff"/><rect x="3.6" y="0" width="3.8" height="2" fill="#fff"/><path d="M1 3.8 H10 L9.4 12 H1.6Z" fill="#fff"/><path d="M3.6 5.2 V10.6 M5.5 5.2 V10.6 M7.4 5.2 V10.6" stroke="#f75444" stroke-width="0.8"/></svg></span></td></tr><tr><td><span class="cb"></span></td><td>15</td><td>0x27Ea54805da6094112eC0d6374EdCb63aBbFF5e2</td><td>1500</td><td>0.15</td><td>-</td><td>2022-04-19 14:58:03</td><td>M2</td><td>-</td><td>已赎回</td><td><span class="op" style="background:#18bc9c;margin-right:4px"><svg width="12" height="12" viewBox="0 0 12 12" style="position:absolute;left:5px;top:5px"><path d="M0 12 L0.6 8.6 L8.4 0.8 L11.2 3.6 L3.4 11.4Z" fill="#fff"/><path d="M1.2 9.6 L2.4 10.8" stroke="#18bc9c" stroke-width="0.8"/></svg></span><span class="op" style="background:#f75444;width:21px"><svg width="11" height="12" viewBox="0 0 11 12" style="position:absolute;left:5px;top:5px"><rect x="0" y="1.6" width="11" height="1.8" fill="#fff"/><rect x="3.6" y="0" width="3.8" height="2" fill="#fff"/><path d="M1 3.8 H10 L9.4 12 H1.6Z" fill="#fff"/><path d="M3.6 5.2 V10.6 M5.5 5.2 V10.6 M7.4 5.2 V10.6" stroke="#f75444" stroke-width="0.8"/></svg></span></td></tr><tr class="odd"><td><span class="cb"></span></td><td>14</td><td>0x27Ea54805da6094112eC0d6374EdCb63aBbFF5e2</td><td>1500</td><td>0.15</td><td>-</td><td>2022-04-19 14:57:41</td><td>M2</td><td>-</td><td>已赎回</td><td><span class="op" style="background:#18bc9c;margin-right:4px"><svg width="12" height="12" viewBox="0 0 12 12" style="position:absolute;left:5px;top:5px"><path d="M0 12 L0.6 8.6 L8.4 0.8 L11.2 3.6 L3.4 11.4Z" fill="#fff"/><path d="M1.2 9.6 L2.4 10.8" stroke="#18bc9c" stroke-width="0.8"/></svg></span><span class="op" style="background:#f75444;width:21px"><svg width="11" height="12" viewBox="0 0 11 12" style="position:absolute;left:5px;top:5px"><rect x="0" y="1.6" width="11" height="1.8" fill="#fff"/><rect x="3.6" y="0" width="3.8" height="2" fill="#fff"/><path d="M1 3.8 H10 L9.4 12 H1.6Z" fill="#fff"/><path d="M3.6 5.2 V10.6 M5.5 5.2 V10.6 M7.4 5.2 V10.6" stroke="#f75444" stroke-width="0.8"/></svg></span></td></tr><tr><td><span class="cb"></span></td><td>13</td><td>0x27Ea54805da6094112eC0d6374EdCb63aBbFF5e2</td><td>1500</td><td>0.15</td><td>-</td><td>2022-04-19 14:49:48</td><td>M2</td><td>2022-04-19 00:00:00</td><td>已赎回</td><td><span class="op" style="background:#18bc9c;margin-right:4px"><svg width="12" height="12" viewBox="0 0 12 12" style="position:absolute;left:5px;top:5px"><path d="M0 12 L0.6 8.6 L8.4 0.8 L11.2 3.6 L3.4 11.4Z" fill="#fff"/><path d="M1.2 9.6 L2.4 10.8" stroke="#18bc9c" stroke-width="0.8"/></svg></span><span class="op" style="background:#f75444;width:21px"><svg width="11" height="12" viewBox="0 0 11 12" style="position:absolute;left:5px;top:5px"><rect x="0" y="1.6" width="11" height="1.8" fill="#fff"/><rect x="3.6" y="0" width="3.8" height="2" fill="#fff"/><path d="M1 3.8 H10 L9.4 12 H1.6Z" fill="#fff"/><path d="M3.6 5.2 V10.6 M5.5 5.2 V10.6 M7.4 5.2 V10.6" stroke="#f75444" stroke-width="0.8"/></svg></span></td></tr></table>
<div class="abs" style="left:256px;top:655px;font-size:14px;line-height:18px;color:#333;white-space:nowrap">显示第 1 到第 10 条记录，总共 21 条记录 每页显示</div>
<div class="abs" style="left:579px;top:649px;width:52px;height:32px;background:#f4f4f4;border:1px solid #ddd;border-radius:3px"></div>
<div class="abs" style="left:593px;top:655px;font-size:14px;line-height:18px;color:#333">10</div>
<svg class="abs" style="left:611px;top:661px" width="8" height="4" viewBox="0 0 8 4"><path d="M0 4 H8 L4 0Z" fill="#333"/></svg>
<div class="abs" style="left:635px;top:655px;font-size:14px;line-height:18px;color:#333">条记录</div>
<div class="abs" style="left:1541px;top:647px;width:233px;height:34px;background:#f9f9f9;border:1px solid #ddd;border-radius:3px"></div>
<div class="abs" style="left:1641px;top:648px;width:1px;height:32px;background:#ddd"></div>
<div class="abs" style="left:1673px;top:648px;width:1px;height:32px;background:#ddd"></div>
<div class="abs" style="left:1706px;top:648px;width:1px;height:32px;background:#ddd"></div>
<div class="abs" style="left:1608px;top:647px;width:33px;height:34px;background:#444c69"></div>
<div class="abs" style="left:1553px;top:655px;font-size:14px;line-height:18px;color:#666">上一页</div>
<div class="abs" style="left:1621px;top:655px;font-size:14px;line-height:18px;color:#fff">1</div>
<div class="abs" style="left:1653px;top:655px;font-size:14px;line-height:18px;color:#666">2</div>
<div class="abs" style="left:1686px;top:655px;font-size:14px;line-height:18px;color:#666">3</div>
<div class="abs" style="left:1719px;top:655px;font-size:14px;line-height:18px;color:#666">下一页</div>
<div class="abs" style="left:1779px;top:647px;width:50px;height:33px;background:#fff;border:1px solid #d2d6de"></div>
<div class="abs" style="left:1834px;top:648px;width:52px;height:32px;background:#f4f4f4;border:1px solid #ddd;border-radius:3px"></div>
<div class="abs" style="left:1847px;top:655px;font-size:13px;line-height:18px;color:#333">跳转</div>
<div class="abs" style="left:1827px;top:869px;font-size:20px;line-height:22px;color:#d52b2d">moyy.us</div>
</body></html>
